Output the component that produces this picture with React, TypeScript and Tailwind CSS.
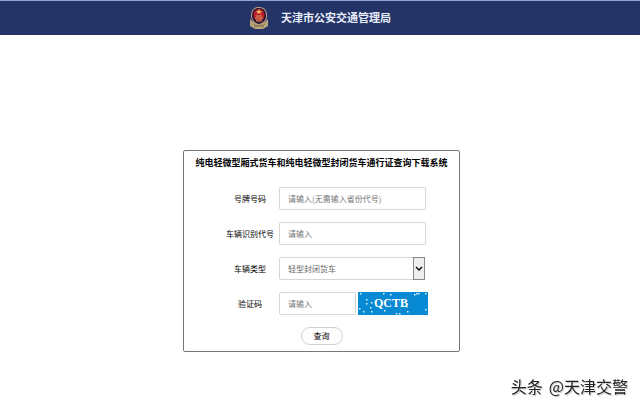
import React from "react";

const specks = [
  [2, 1], [25, 1], [32, 2], [56, 2], [58, 1], [60, 1], [67, 1], [8, 7], [8, 11], [13, 10],
  [1, 16], [12, 15], [13, 19], [26, 18], [48, 14], [49, 19], [67, 17], [38, 21], [41, 21], [5, 19],
];

function Emblem() {
  return (
    <svg viewBox="0 0 20 22" className="h-[22px] w-5" aria-hidden="true">
      <path d="M1 12 L4 15 L10 17 L16 15 L19 12 L19 19 L14 22 H6 L1 19 Z" fill="#b9a779" />
      <path d="M4 17 L8 19 H12 L16 17 M5 20 L10 18 L15 20" stroke="#81704c" fill="none" />
      <path d="M10 0 C16 0 18 4 18 9 C18 14 14 17 10 18 C6 17 2 14 2 9 C2 4 4 0 10 0 Z" fill="#c39a8a" />
      <path d="M10 1 C15 1 17 4 17 9 C17 13 14 16 10 17 C6 16 3 13 3 9 C3 4 5 1 10 1 Z" fill="#2a1830" />
      <ellipse cx="10" cy="8" rx="5.5" ry="6" fill="#b8202b" />
      <path d="M10 2 L11 4 L13 4 L11.500 5.500 L12 7 L10 6 L8 7 L8.500 5.500 L7 4 L9 4 Z" fill="#efb45c" />
      <path d="M6 11 H14 M7 9 H13 M8 12 V15 M12 12 V15 M10 12 V15" stroke="#dc9660" />
    </svg>
  );
}

function Captcha() {
  return (
    <svg viewBox="0 0 70 23" className="h-[23px] w-[70px]" role="img" aria-label="QCTB">
      <rect width="70" height="23" fill="#0789d3" />
      {specks.map(([x, y]) => (
        <rect key={`${x}-${y}`} x={x} y={y} width="1.500" height="1.500" fill="#e4f4fc" />
      ))}
      <text x="16" y="15" fill="#fff" fontSize="12" fontWeight="bold" fontFamily="'Liberation Serif', serif">
        QCTB
      </text>
    </svg>
  );
}

const label = "w-[50px] text-center text-black";
const field =
  "h-[23px] rounded-[2px] border border-[#d6d6d6] bg-white px-2 text-[#666] outline-none placeholder:text-[#757575]";

export default function App() {
  return (
    <div className="flex min-h-screen flex-col bg-white font-['Noto_Sans_CJK_SC',sans-serif] text-[8px] leading-3">
      <header className="flex h-[35px] items-start justify-center gap-3 border-t border-[#8fa6cc] bg-[#253467] pt-1.5">
        <Emblem />
        <h1 className="pt-0.5 text-[11px] leading-4 font-bold text-[#e8edfa]">天津市公安交通管理局</h1>
      </header>

      <main className="flex justify-center pt-[115px] pl-[3px]">
        <form
          className="w-[277px] rounded-[2px] border border-[#777] pt-1 pb-1.5"
          onSubmit={(e) => e.preventDefault()}
        >
          <h2 className="text-center text-[9px] leading-4 font-bold whitespace-nowrap text-black">
            纯电轻微型厢式货车和纯电轻微型封闭货车通行证查询下载系统
          </h2>

          <div className="mt-4 flex flex-col gap-3 pl-[41px]">
            <div className="flex items-center gap-1">
              <label htmlFor="plate" className={label}>号牌号码</label>
              <input id="plate" placeholder="请输入(无需输入省份代号)" className={`${field} w-[147px]`} />
            </div>
            <div className="flex items-center gap-1">
              <label htmlFor="vin" className={label}>车辆识别代号</label>
              <input id="vin" placeholder="请输入" className={`${field} w-[147px]`} />
            </div>
            <div className="flex items-center gap-1">
              <label htmlFor="type" className={label}>车辆类型</label>
              <div className="relative">
                <select id="type" className={`${field} block w-[146px] appearance-none`}>
                  <option>轻型封闭货车</option>
                </select>
                <span className="pointer-events-none absolute inset-y-0 right-0 flex w-3 items-center justify-center border border-[#888] bg-[#eee]">
                  <svg viewBox="0 0 8 6" className="h-1.5 w-2" aria-hidden="true">
                    <path d="M1 1 L4 4 L7 1" fill="none" stroke="#111" strokeWidth="1.500" />
                  </svg>
                </span>
              </div>
            </div>
            <div className="flex items-center gap-1">
              <label htmlFor="code" className={label}>验证码</label>
              <div className="flex gap-0.5">
                <input id="code" placeholder="请输入" className={`${field} w-[77px]`} />
                <Captcha />
              </div>
            </div>
          </div>

          <div className="mt-3 flex justify-center">
            <button type="submit" className="h-[18px] w-[42px] rounded-full border border-[#d0d0d0] bg-white text-black">
              查询
            </button>
          </div>
        </form>
      </main>

      <p className="fixed right-3 bottom-2 flex gap-1.5 text-[16px] leading-6 text-[#222] [text-shadow:-1px_-1px_0_#fff,1px_1px_1px_#bbb]">
        <span>头条</span>
        <span>@天津交警</span>
      </p>
    </div>
  );
}
